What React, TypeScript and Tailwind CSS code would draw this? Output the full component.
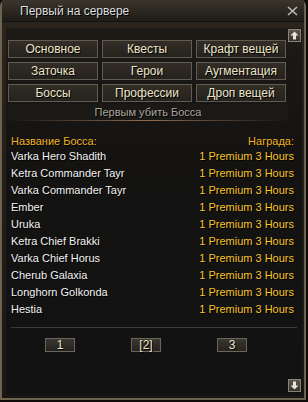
import React from "react";

const tabs = [
  "Основное",
  "Квесты",
  "Крафт вещей",
  "Заточка",
  "Герои",
  "Аугментация",
  "Боссы",
  "Профессии",
  "Дроп вещей",
];

const bosses = [
  "Varka Hero Shadith",
  "Ketra Commander Tayr",
  "Varka Commander Tayr",
  "Ember",
  "Uruka",
  "Ketra Chief Brakki",
  "Varka Chief Horus",
  "Cherub Galaxia",
  "Longhorn Golkonda",
  "Hestia",
];

function ScrollButton({ down }: { down?: boolean }) {
  return (
    <div className="w-[13px] h-[13px] border border-[#8a8478] bg-gradient-to-b from-[#5a564e] to-[#34312b] flex items-center justify-center">
      <svg width="9" height="9" viewBox="0 0 9 9" className={down ? "rotate-180" : ""}>
        <path d="M4.5 0.5 L8.5 4.5 L6 4.5 L6 8.5 L3 8.5 L3 4.5 L0.5 4.5 Z" fill="#e8e4da" />
      </svg>
    </div>
  );
}

export default function App() {
  return (
    <div
      className="w-[308px] h-[402px] bg-[#0d0c0b] overflow-hidden"
      style={{ fontFamily: '"Liberation Sans", Arial, sans-serif' }}
    >
      <div className="w-[306px] h-[400px] flex flex-col bg-[#2a241d] border-x-[2px] border-b-[2px] border-[#6e6250] rounded-t-[6px] [text-shadow:1px_1px_0_#000]">
        {/* Title bar */}
        <div className="h-[22px] shrink-0 flex items-center justify-between pl-[18px] pr-[6px] bg-gradient-to-b from-[#3a352c] to-[#1e1c18] border-b border-[#14120f]">
          <span className="text-[12px] text-[#dedede] leading-none">Первый на сервере</span>
          <svg width="11" height="10" viewBox="0 0 11 10">
            <path d="M1 1 L10 9 M10 1 L1 9" stroke="#bdbab4" strokeWidth="1.6" />
          </svg>
        </div>

        {/* Body */}
        <div className="flex-1 pt-[6px] pl-[4px] pr-[2px] pb-[3px] bg-gradient-to-b from-[#2b241c] to-[#1a1612]">
          <div className="relative h-full bg-gradient-to-b from-[#1d1a16] via-[#141312] via-35% to-[#121212] pt-[12px] pl-[2px] pr-[14px]">
            {/* Scrollbar */}
            <div className="absolute right-[1px] top-[1px]">
              <ScrollButton />
            </div>
            <div className="absolute right-[1px] bottom-[3px]">
              <ScrollButton down />
            </div>

            {/* Tabs */}
            <div className="grid grid-cols-[90px_90px_90px] gap-[4px]">
              {tabs.map((t) => (
                <div
                  key={t}
                  className="h-[18px] flex items-center justify-center border border-[#625b50] bg-gradient-to-b from-[#322d26] to-[#25221d] text-[12px] text-[#ece4c8]"
                >
                  {t}
                </div>
              ))}
            </div>

            {/* Caption */}
            <div className="mt-[2px] h-[16px] flex items-center justify-center text-[11px] text-[#aaa69e] bg-[#1b1916]">
              Первым убить Босса
            </div>
            <div className="h-[1px] bg-gradient-to-r from-transparent via-[#8e6c52] to-transparent" />

            {/* List */}
            <div className="mr-[-8px] pl-[3px] pr-[2px]">
              <div className="mt-[13px] h-[14px] flex items-center justify-between text-[11px] text-[#f2b422]">
                <span>Название Босса:</span>
                <span>Награда:</span>
              </div>
              {bosses.map((b) => (
                <div key={b} className="h-[17px] flex items-center justify-between text-[11px]">
                  <span className="text-[#f2f2f2]">{b}</span>
                  <span className="text-[#f8c42c]">1 Premium 3 Hours</span>
                </div>
              ))}
            </div>

            <div className="mt-[9px] ml-[3px] mr-[-9px] h-[1px] bg-[#3a3a3a]" />

            {/* Pages */}
            <div className="mt-[10px] pl-[37px] flex gap-[56px]">
              {["1", "[2]", "3"].map((p) => (
                <div
                  key={p}
                  className="w-[30px] h-[14px] flex items-center justify-center border border-[#6a645a] bg-gradient-to-b from-[#3a3630] to-[#26231f] text-[12px] text-[#ece4c8] leading-none"
                >
                  {p}
                </div>
              ))}
            </div>
          </div>
        </div>
      </div>
    </div>
  );
}
